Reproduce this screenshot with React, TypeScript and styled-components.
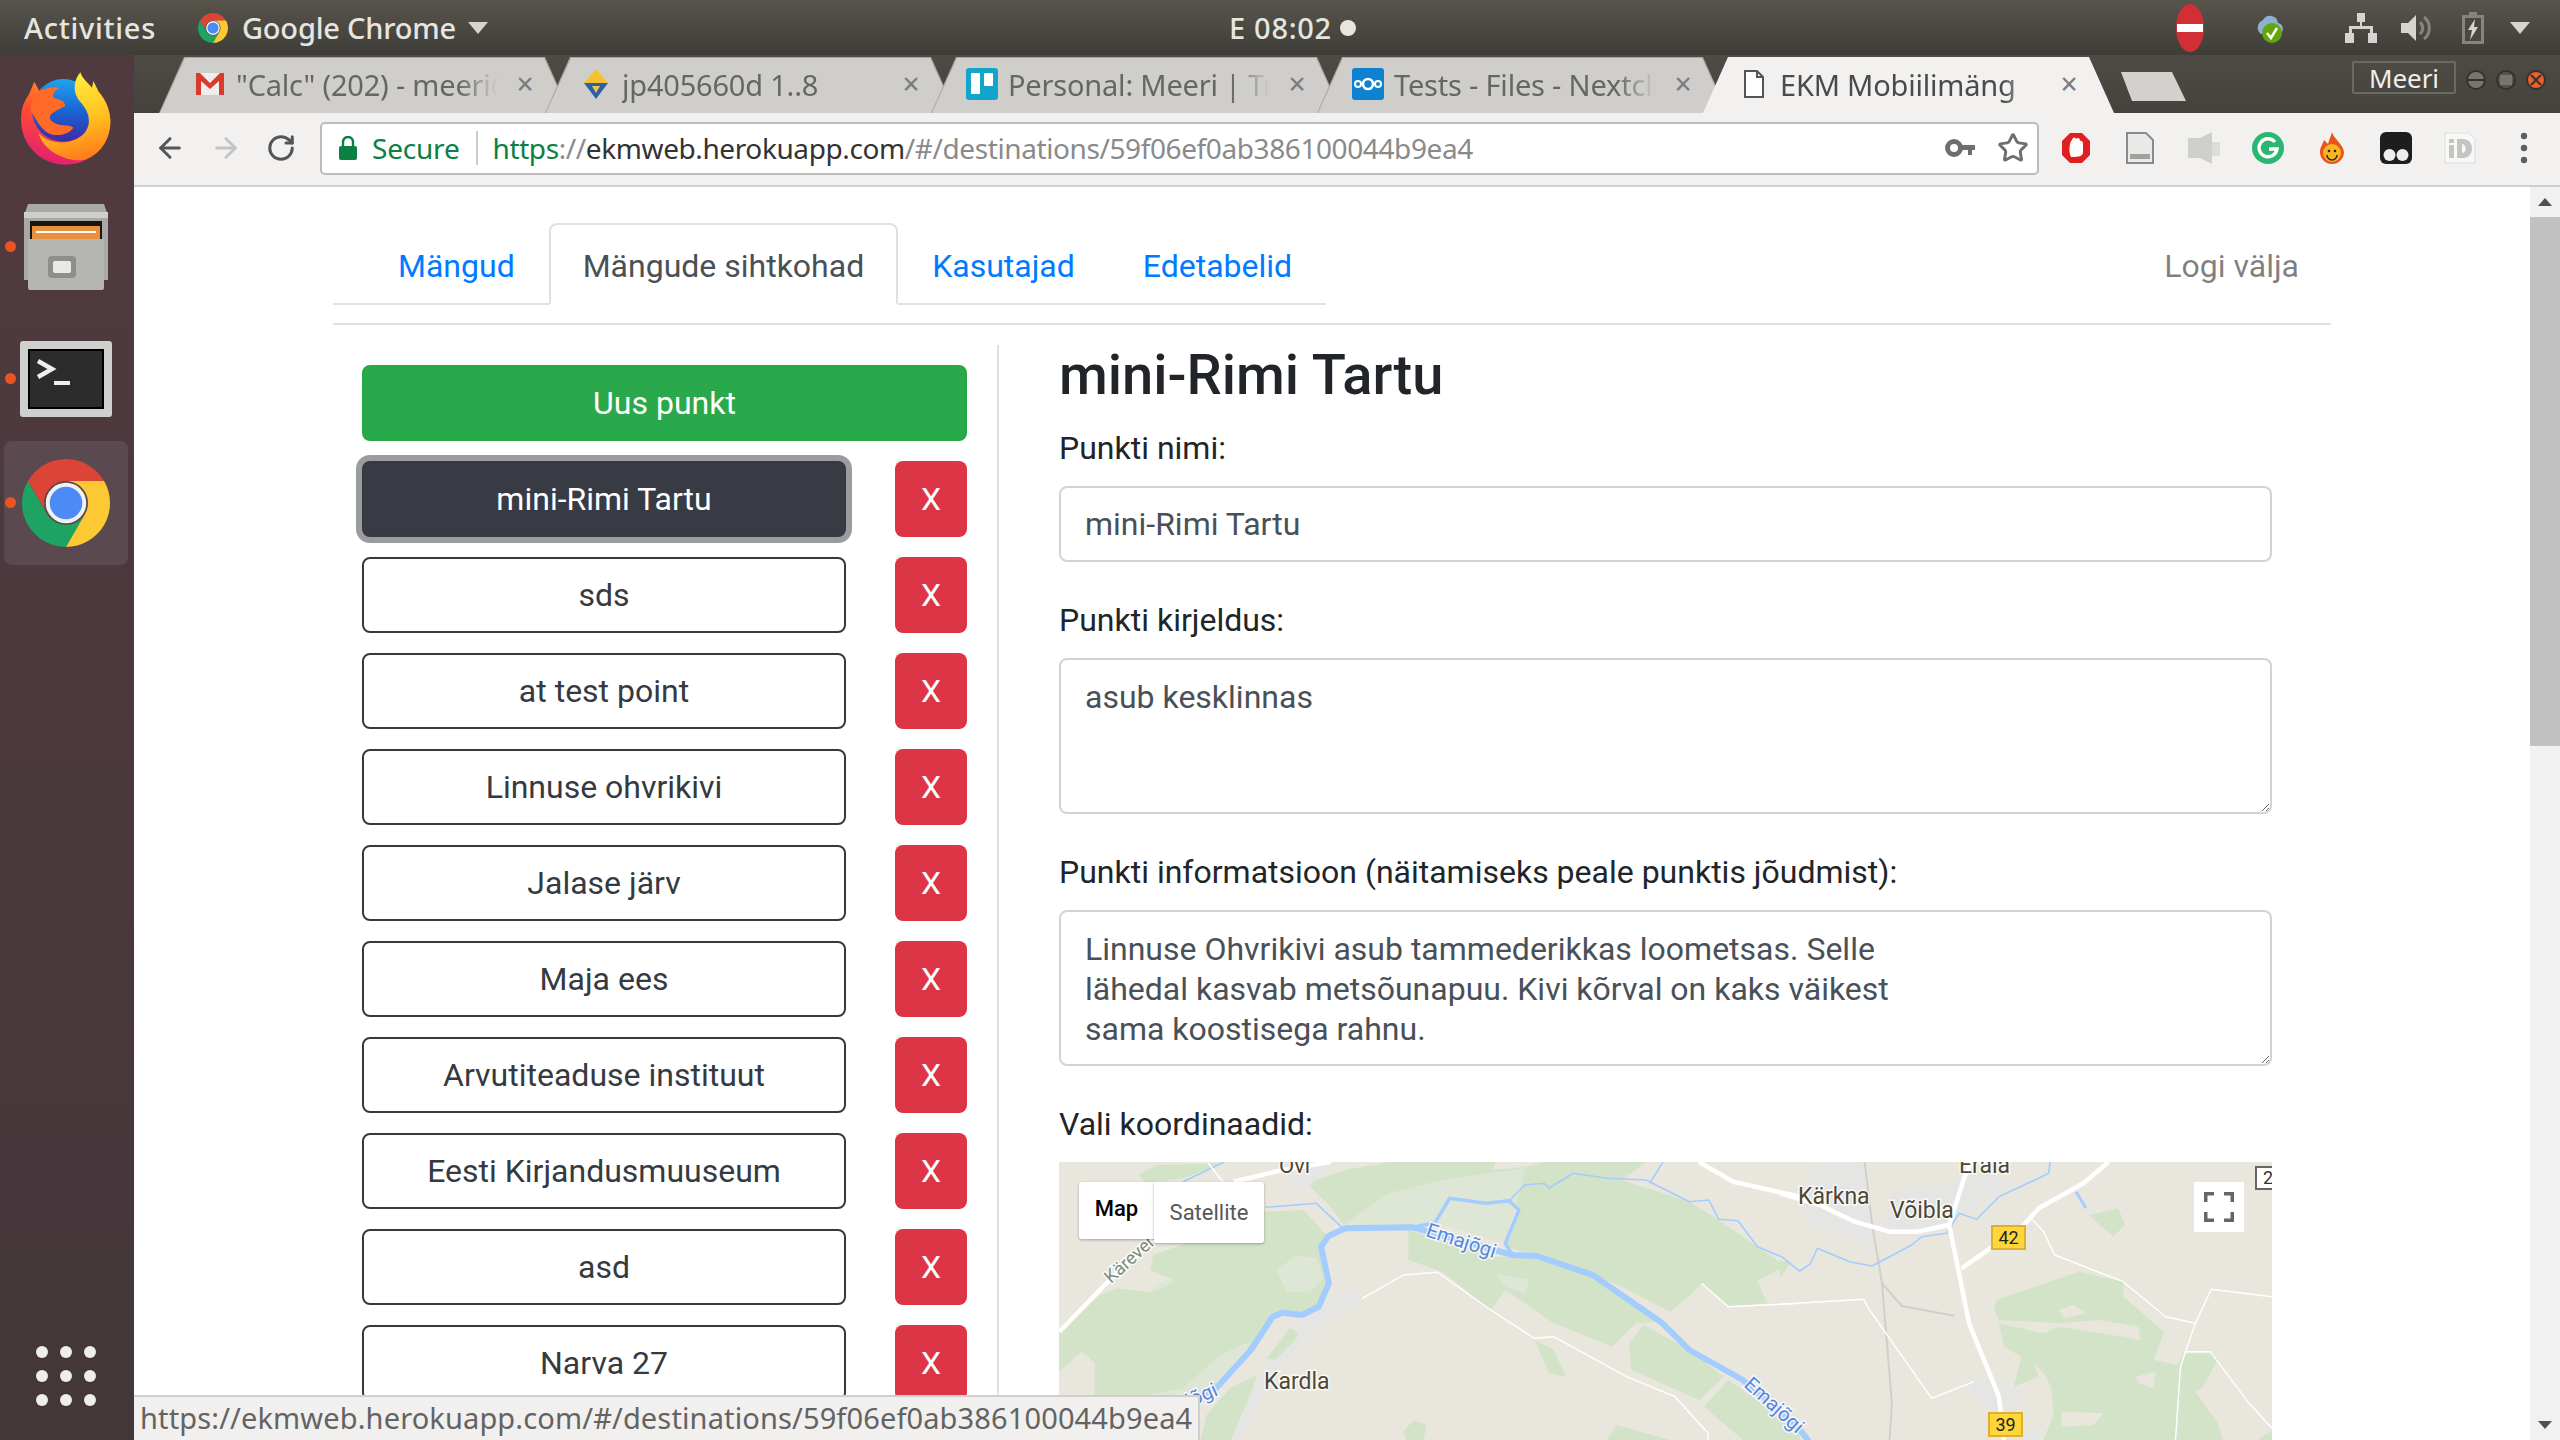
import React from "react";
import styled, { createGlobalStyle } from "styled-components";
import { ArrowLeft, ArrowRight, RotateCw, Star } from "lucide-react";

const UI_FONT = `"Noto Sans", "Open Sans", sans-serif`;

const GlobalStyle = createGlobalStyle`
  html, body { margin: 0; padding: 0; height: 100%; overflow: hidden; background: #fff; }
  * { box-sizing: border-box; }
`;

const Screen = styled.div`
  width: 2560px;
  height: 1440px;
  display: flex;
  flex-direction: column;
  overflow: hidden;
  font-family: Roboto, sans-serif;
`;

/* ---- gnome top bar ---- */
const TopBar = styled.div`
  height: 55px;
  flex: none;
  display: flex;
  align-items: center;
  background: linear-gradient(#57544c, #3f3d38);
  color: #e6e5e1;
  font-family: ${UI_FONT};
  font-size: 29px;
  font-weight: 500;
`;
const TopLeft = styled.div`
  width: 1229px;
  padding-left: 24px;
  display: flex;
  align-items: center;
`;
const Activities = styled.span`
  letter-spacing: 0.7px;
  margin-right: 42px;
`;
const AppName = styled.span`
  letter-spacing: -0.2px;
  margin: 0 12px 0 14px;
`;
const Clock = styled.div`
  display: flex;
  align-items: center;
  gap: 8px;
  letter-spacing: 0.7px;
`;
const ClockDot = styled.span`
  width: 16px;
  height: 16px;
  border-radius: 50%;
  background: #e6e5e1;
`;
const Tray = styled.div`
  margin-left: auto;
  display: flex;
  align-items: center;
  padding-right: 30px;
`;
const TraySlot = styled.div<{ $gap: number }>`
  margin-left: ${({ $gap }) => $gap}px;
  display: flex;
`;

const Middle = styled.div`
  flex: 1;
  min-height: 0;
  display: flex;
`;

/* ---- launcher dock ---- */
const Dock = styled.div`
  width: 134px;
  flex: none;
  display: flex;
  flex-direction: column;
  align-items: center;
  background: linear-gradient(#513a3f, #43373a);
  padding: 4px 2px 0 0;
`;
const DockItem = styled.div<{ $height: number; $active?: boolean }>`
  position: relative;
  width: 124px;
  height: ${({ $height }) => $height}px;
  flex: none;
  display: flex;
  align-items: center;
  justify-content: center;
  border-radius: 8px;
  background: ${({ $active }) => ($active ? "#5a494e" : "transparent")};
`;
const RunningDot = styled.span`
  position: absolute;
  left: 1px;
  top: 50%;
  width: 11px;
  height: 11px;
  margin-top: -6px;
  border-radius: 50%;
  background: #e95420;
`;
const AppGrid = styled.div`
  margin-top: auto;
  margin-bottom: 34px;
  display: grid;
  grid-template-columns: repeat(3, 12px);
  gap: 12px;
`;
const AppGridDot = styled.span`
  width: 12px;
  height: 12px;
  border-radius: 50%;
  background: #efeeec;
`;

/* ---- browser window ---- */
const Browser = styled.div`
  flex: 1;
  min-width: 0;
  display: flex;
  flex-direction: column;
  position: relative;
`;
const TabStrip = styled.div`
  height: 58px;
  flex: none;
  display: flex;
  align-items: flex-end;
  padding-left: 25px;
  background: linear-gradient(#4d4b44, #44423c);
  font-family: ${UI_FONT};
`;
const Tab = styled.div<{ $active?: boolean }>`
  position: relative;
  width: 411px;
  height: 56px;
  margin-right: -25px;
  flex: none;
  display: flex;
  align-items: center;
  padding: 0 30px 2px 35px;
  z-index: ${({ $active }) => ($active ? 2 : 1)};
  color: ${({ $active }) => ($active ? "#4a4a4a" : "#666")};
  font-size: 29px;
  clip-path: polygon(0 100%, 25px 0, 386px 0, 411px 100%);
  background: ${({ $active }) => ($active ? "#f2f1ef" : "#a8a7a4")};
  &::before {
    content: "";
    position: absolute;
    inset: 1px 0 0;
    background: ${({ $active }) => ($active ? "#f2f1ef" : "#cfcecb")};
    clip-path: polygon(1px 100%, 26px 0, 385px 0, 410px 100%);
  }
  & > * {
    position: relative;
  }
`;
const Favicon = styled.span`
  width: 32px;
  height: 32px;
  flex: none;
  display: flex;
  align-items: center;
  justify-content: center;
  margin-right: 10px;
`;
const TabTitle = styled.span`
  flex: 1;
  min-width: 0;
  margin-right: 12px;
  overflow: hidden;
  white-space: nowrap;
  letter-spacing: -0.2px;
  -webkit-mask-image: linear-gradient(to right, #000 85%, transparent 100%);
  mask-image: linear-gradient(to right, #000 85%, transparent 100%);
`;
const TabClose = styled.span`
  width: 30px;
  flex: none;
  text-align: center;
  font-size: 30px;
  line-height: 30px;
  color: #7b7b7b;
`;
const NewTab = styled.span`
  width: 65px;
  height: 29px;
  margin: 0 0 12px 32px;
  flex: none;
  z-index: 2;
  background: #d2d1ce;
  clip-path: polygon(0 0, 51px 0, 65px 100%, 11px 100%);
`;
const WindowTools = styled.div`
  margin-left: auto;
  align-self: flex-start;
  display: flex;
  align-items: center;
  padding: 6px 9px 0 0;
`;
const ProfileButton = styled.span`
  width: 104px;
  height: 33px;
  border: 2px solid #6b6a62;
  border-radius: 2px;
  display: flex;
  align-items: center;
  justify-content: center;
  color: #f0efec;
  font-size: 26px;
  letter-spacing: -0.1px;
  margin-right: 5px;
`;
const WindowButton = styled.span`
  width: 20px;
  height: 20px;
  margin: 5px 5px 0;
  display: flex;
`;

const Toolbar = styled.div`
  height: 74px;
  flex: none;
  display: flex;
  align-items: center;
  padding: 0 0 2px 20px;
  background: #f2f1ef;
  border-bottom: 2px solid #d0cfcd;
`;
const NavIcon = styled.span<{ $off?: boolean }>`
  width: 56px;
  display: flex;
  color: ${({ $off }) => ($off ? "#c4c4c4" : "#555")};
`;
const AddressBar = styled.div`
  width: 1719px;
  height: 53px;
  margin-left: -2px;
  flex: none;
  display: flex;
  align-items: center;
  padding: 0 6px 0 17px;
  background: #fff;
  border: 2px solid #bcbcbb;
  border-radius: 5px;
  font-family: ${UI_FONT};
  font-size: 28px;
  white-space: nowrap;
`;
const SecureLabel = styled.span`
  color: #0b8043;
  margin-left: 15px;
  letter-spacing: -0.2px;
`;
const AddressDivider = styled.span`
  width: 2px;
  height: 34px;
  margin: 0 15px 0 16px;
  background: #ccc;
`;
const UrlPart = styled.span<{ $tone: "secure" | "dim" | "host" }>`
  letter-spacing: -0.4px;
  color: ${({ $tone }) =>
    $tone === "secure" ? "#0b8043" : $tone === "host" ? "#333" : "#8a8a8a"};
`;
const AddressIcons = styled.div`
  margin-left: auto;
  display: flex;
  align-items: center;
  gap: 22px;
  padding-right: 2px;
  color: #6e6e6e;
`;
const Extensions = styled.div`
  display: flex;
  margin-left: 5px;
`;
const ExtensionSlot = styled.span`
  width: 64px;
  display: flex;
  justify-content: center;
  align-items: center;
`;

/* ---- web page ---- */
const Viewport = styled.div`
  flex: 1;
  min-height: 0;
  display: flex;
`;
const Page = styled.main`
  flex: 1;
  min-width: 0;
  overflow: hidden;
  background: #fff;
  color: #212529;
  font-size: 32px;
  line-height: 48px;
`;
const Container = styled.div`
  width: 1998px;
  margin: 0 auto;
  padding-top: 36px;
`;
const Header = styled.header`
  display: flex;
  justify-content: space-between;
  align-items: flex-start;
  padding-bottom: 18px;
  border-bottom: 2px solid #dee2e6;
`;
const NavTabs = styled.nav`
  width: 993px;
  display: flex;
  padding-left: 31px;
  border-bottom: 2px solid #dee2e6;
`;
const NavTab = styled.a<{ $active?: boolean }>`
  height: 82px;
  margin-bottom: -2px;
  padding: 17px 32px 0;
  border: 2px solid ${({ $active }) => ($active ? "#dee2e6" : "transparent")};
  border-bottom-color: ${({ $active }) => ($active ? "#fff" : "transparent")};
  border-radius: 8px 8px 0 0;
  color: ${({ $active }) => ($active ? "#495057" : "#007bff")};
  white-space: nowrap;
`;
const Logout = styled.a`
  margin: 19px 32px 0 0;
  color: rgba(0, 0, 0, 0.5);
`;
const Columns = styled.div`
  display: flex;
  align-items: flex-start;
`;
const ListColumn = styled.aside`
  width: 666px;
  flex: none;
  margin-top: 20px;
  padding: 20px 30px 0 29px;
  border-right: 2px solid #dee2e6;
  display: flex;
  flex-direction: column;
  gap: 20px;
`;
const PrimaryButton = styled.button`
  height: 76px;
  border: 2px solid #28a745;
  border-radius: 8px;
  background: #2aa84c;
  color: #fff;
  font: inherit;
`;
const PointRow = styled.div`
  display: flex;
  justify-content: space-between;
`;
const PointButton = styled.button<{ $selected?: boolean }>`
  width: 484px;
  height: 76px;
  border: 2px solid #343a40;
  border-radius: 8px;
  font: inherit;
  background: ${({ $selected }) => ($selected ? "#383b43" : "#fff")};
  color: ${({ $selected }) => ($selected ? "#fff" : "#343a40")};
  box-shadow: ${({ $selected }) => ($selected ? "0 0 0 6px #9b9c9f" : "none")};
`;
const DeleteButton = styled.button`
  width: 72px;
  height: 76px;
  border: 0;
  border-radius: 8px;
  background: #dc3545;
  color: #fff;
  font: inherit;
`;
const DetailColumn = styled.section`
  flex: 1;
  padding: 17px 0 0 60px;
`;
const Title = styled.h2`
  margin: 0 0 13px;
  font-size: 56px;
  line-height: 67px;
  font-weight: 500;
`;
const FieldLabel = styled.label`
  display: block;
  padding-top: 2px;
  margin-bottom: 14px;
`;
const Field = styled.div`
  margin-bottom: 32px;
`;
const TextInput = styled.input`
  display: block;
  width: 1213px;
  height: 76px;
  padding: 12px 24px;
  border: 2px solid #ced4da;
  border-radius: 8px;
  color: #495057;
  font: inherit;
  line-height: 40px;
  outline: none;
`;
const TextArea = styled.textarea<{ $height: number }>`
  display: block;
  width: 1213px;
  height: ${({ $height }) => $height}px;
  padding: 17px 24px 7px;
  border: 2px solid #ced4da;
  border-radius: 8px;
  color: #495057;
  font: inherit;
  line-height: 40px;
  outline: none;
`;
const MapFrame = styled.div`
  position: relative;
  width: 1213px;
  height: 280px;
  overflow: hidden;
  font-family: Roboto, sans-serif;
`;
const MapTypes = styled.div`
  position: absolute;
  left: 20px;
  top: 20px;
  display: flex;
  align-items: flex-start;
  font-size: 22px;
  line-height: 26px;
`;
const MapType = styled.span<{ $active?: boolean }>`
  display: flex;
  align-items: center;
  justify-content: center;
  background: #fff;
  width: ${({ $active }) => ($active ? 75 : 110)}px;
  height: ${({ $active }) => ($active ? 57 : 61)}px;
  color: ${({ $active }) => ($active ? "#000" : "#565656")};
  font-weight: ${({ $active }) => ($active ? 500 : 400)};
  border-radius: ${({ $active }) => ($active ? "3px 0 0 3px" : "0 3px 3px 0")};
  box-shadow: 0 1px 3px rgba(0, 0, 0, 0.3);
  padding-bottom: ${({ $active }) => ($active ? 4 : 0)}px;
`;
const FullscreenButton = styled.span`
  position: absolute;
  left: 1135px;
  top: 20px;
  width: 50px;
  height: 50px;
  display: flex;
  align-items: center;
  justify-content: center;
  background: #fff;
`;
const ZoomBadge = styled.span`
  position: absolute;
  left: 1196px;
  top: 4px;
  width: 20px;
  height: 24px;
  padding-left: 6px;
  background: #fff;
  border: 2px solid #666;
  color: #333;
  font-size: 18px;
  line-height: 20px;
`;

const Scrollbar = styled.div`
  width: 30px;
  flex: none;
  display: flex;
  flex-direction: column;
  background: #f1f1f1;
  align-items: center;
`;
const ScrollArrow = styled.span<{ $down?: boolean }>`
  height: 30px;
  flex: none;
  display: flex;
  align-items: center;
  margin-top: ${({ $down }) => ($down ? "auto" : 0)};
`;
const ScrollThumb = styled.span`
  width: 100%;
  height: 529px;
  background: #c1c1c1;
`;
const StatusBubble = styled.div`
  position: absolute;
  left: 0;
  bottom: 0;
  width: 1066px;
  height: 45px;
  padding-left: 6px;
  background: #f1f0ee;
  border-top: 2px solid #cfcfcd;
  border-right: 2px solid #cfcfcd;
  color: #636363;
  font-family: ${UI_FONT};
  font-size: 29px;
  line-height: 42px;
  letter-spacing: 0.13px;
  white-space: nowrap;
`;

/* ---- drawn icons ---- */
const ChromeLogo = ({ size }: { size: number }) => (
  <svg width={size} height={size} viewBox="4 4 40 40">
    <path d="M6.68 14A20 20 0 0 1 41.32 14H24A10 10 0 0 0 15.34 29Z" fill="#db4437" />
    <path d="M6.68 14L15.34 29A10 10 0 0 0 32.66 29L24 44A20 20 0 0 1 6.68 14Z" fill="#1da462" />
    <path d="M41.32 14A20 20 0 0 1 24 44L32.66 29A10 10 0 0 0 24 14Z" fill="#fcc934" />
    <circle cx="24" cy="24" r="9.2" fill="#f1f1f1" />
    <circle cx="24" cy="24" r="7.4" fill="#4c8bf5" />
  </svg>
);

const FirefoxLogo = () => (
  <svg width="92" height="95" viewBox="62 46 276 285">
    <defs>
      <linearGradient id="ffBody" x1="0.75" y1="0.05" x2="0.45" y2="1">
        <stop offset="0" stopColor="#ff9a1f" />
        <stop offset="0.45" stopColor="#ff4f2e" />
        <stop offset="1" stopColor="#e6206e" />
      </linearGradient>
      <linearGradient id="ffGlobe" x1="0.5" y1="0" x2="0.5" y2="1">
        <stop offset="0" stopColor="#1ea4ee" />
        <stop offset="0.55" stopColor="#1b5fd0" />
        <stop offset="1" stopColor="#3d2aa6" />
      </linearGradient>
      <linearGradient id="ffTail" x1="0.4" y1="0" x2="0.6" y2="1">
        <stop offset="0" stopColor="#fff044" />
        <stop offset="0.55" stopColor="#ffc21f" />
        <stop offset="1" stopColor="#ff7a1c" />
      </linearGradient>
    </defs>
    <path d="M88 118L105 78L120 106L200 96L300 110C325 140 333 170 333 197C333 270 272 327 200 327C125 327 65 268 65 192C65 160 74 136 88 118Z" fill="url(#ffBody)" />
    <circle cx="192" cy="164" r="94" fill="url(#ffGlobe)" />
    <path d="M118 106C140 96 165 92 182 96C165 104 156 118 165 128C176 130 196 134 198 150C186 158 172 162 160 172C146 182 150 196 170 204C190 212 212 206 222 216C210 232 190 240 165 238C125 232 112 190 96 170C92 140 100 118 118 106Z" fill="#ff6a26" />
    <path d="M243 50C224 72 220 104 236 130C256 154 272 172 268 206C262 236 232 258 196 260C160 262 136 252 118 232C132 290 210 322 256 312C306 296 335 246 333 192C330 160 318 134 300 112L282 76L278 96C268 84 250 70 243 50Z" fill="url(#ffTail)" />
  </svg>
);

const FileCabinet = () => (
  <svg width="84" height="86" viewBox="0 0 84 86">
    <path d="M4 0H80L84 12V76H0V12Z" fill="#a9a9a7" />
    <rect x="0" y="8" width="84" height="6" fill="#cfcfcd" />
    <rect x="6" y="17" width="72" height="20" fill="#1b1510" />
    <rect x="8" y="22" width="68" height="20" fill="#e8913a" />
    <rect x="12" y="27" width="60" height="2" fill="#fff" />
    <rect x="4" y="35" width="76" height="51" rx="2" fill="#b5b5b3" />
    <rect x="24" y="52" width="28" height="22" rx="4" fill="#8e8e8c" />
    <rect x="29" y="57" width="18" height="12" rx="2" fill="#e9e9e7" />
  </svg>
);

const TerminalIcon = () => (
  <svg width="92" height="76" viewBox="0 0 92 76">
    <rect width="92" height="76" rx="3" fill="#cfcfcd" />
    <rect x="8" y="8" width="76" height="60" fill="#000" />
    <rect x="10" y="10" width="72" height="56" fill="#2c2c2c" />
    <path d="M18 20L32 28L18 36" fill="none" stroke="#eee" strokeWidth="4.5" />
    <rect x="34" y="40" width="16" height="4" fill="#eee" />
  </svg>
);

const DropArrow = ({ color }: { color: string }) => (
  <svg width="20" height="12" viewBox="0 0 20 12">
    <path d="M0 0H20L10 12Z" fill={color} />
  </svg>
);

const GmailIcon = () => (
  <svg width="28" height="22" viewBox="0 0 28 22">
    <rect width="28" height="22" fill="#eee" />
    <path d="M0 22V0H4L14 10L24 0H28V22H23V8L14 16L5 8V22Z" fill="#d93a2e" />
  </svg>
);
const JpIcon = () => (
  <svg width="30" height="30" viewBox="0 0 30 30">
    <path d="M15 0L27 14H3Z" fill="#f2c230" />
    <path d="M3 14H27L15 30Z" fill="#2f5fa8" />
    <path d="M11 17H19L15 24Z" fill="#e8c84a" />
  </svg>
);
const TrelloIcon = () => (
  <svg width="32" height="32" viewBox="0 0 32 32">
    <rect width="32" height="32" rx="3" fill="#12a4c9" />
    <rect x="5" y="5" width="9" height="21" rx="1" fill="#fff" />
    <rect x="18" y="5" width="9" height="13" rx="1" fill="#fff" />
  </svg>
);
const NextcloudIcon = () => (
  <svg width="32" height="32" viewBox="0 0 32 32">
    <rect width="32" height="32" rx="3" fill="#0d82d0" />
    <circle cx="16" cy="16" r="5" fill="none" stroke="#fff" strokeWidth="2.6" />
    <circle cx="6" cy="16" r="3" fill="none" stroke="#fff" strokeWidth="2" />
    <circle cx="26" cy="16" r="3" fill="none" stroke="#fff" strokeWidth="2" />
  </svg>
);
const PageIcon = () => (
  <svg width="20" height="28" viewBox="0 0 20 28">
    <path d="M1 1H13L19 7V27H1Z" fill="#fff" stroke="#555" strokeWidth="2" />
    <path d="M13 1V7H19" fill="none" stroke="#555" strokeWidth="2" />
  </svg>
);

const MAP_W = 1213;
const MAP_H = 280;
type Pts = number[];
const fmt = (p: number[]) => p.map((v) => v.toFixed(1)).join(" ");
// traced from crops of the map, each with its own scale
const left = (p: Pts) => fmt(p.map((v, i) => (i % 2 === 0 ? v / 2.063 - 19 : v / 3 - 12)));
const right = (p: Pts) => fmt(p.map((v, i) => (i % 2 === 0 ? v / 2.01 + 721 : v / 3 - 12)));
const near = (p: Pts) => fmt(p.map((v, i) => (i % 2 === 0 ? v / 3 - 9 : v / 3 - 7)));

const FOREST = "#d3e3c8";
const FOREST_LIGHT = "#dee7d6";
const URBAN = "#e5e5e4";
const RIVER = "#a3ccff";
const LAND = "#e9e7dd";
const forestNear: Pts[] = [
  [27, 530, 150, 420, 200, 400, 290, 410, 370, 375, 300, 345, 310, 300, 420, 260, 640, 170, 760, 165, 830, 240, 810, 280, 835, 380, 800, 460, 750, 475, 690, 470, 640, 510, 600, 590, 500, 690, 440, 760, 400, 860, 130, 860, 135, 625, 95, 590, 27, 650],
  [265, 60, 320, 30, 520, 25, 400, 70, 290, 85],
  [650, 610, 720, 520, 760, 540, 700, 620],
  [470, 780, 540, 700, 620, 660, 560, 860, 450, 860],
  [1060, 830, 1090, 795, 1130, 810, 1120, 860, 1070, 860],
];
const forestLightNear: Pts[] = [
  [680, 345, 740, 300, 800, 310, 820, 370, 780, 410, 710, 410],
  [400, 700, 510, 600, 600, 560, 590, 590, 500, 690, 440, 720, 290, 720],
  [290, 410, 350, 372, 372, 380, 310, 412],
];
const urbanNear: Pts[] = [
  [710, 70, 830, 25, 860, 25, 800, 70, 770, 105, 720, 105],
  [750, 500, 905, 390, 935, 430, 800, 530, 750, 570, 680, 660, 640, 710, 600, 790, 570, 860, 540, 860, 600, 720, 650, 640, 740, 550],
];
const forestLeft: Pts[] = [
  [550, 100, 630, 60, 720, 36, 940, 36, 935, 60, 1000, 50, 1040, 36, 1250, 36, 1200, 90, 1340, 155, 1400, 210, 1540, 350, 1480, 390, 1500, 460, 1420, 470, 1365, 400, 1345, 430, 1300, 485, 1200, 410, 1140, 375, 1025, 318, 960, 290, 990, 180, 968, 150, 920, 160, 845, 145, 815, 218, 630, 235, 600, 170],
  [760, 240, 940, 320, 1025, 320, 1140, 380, 1280, 515, 1230, 520, 1180, 590, 1060, 520, 960, 420, 930, 480, 830, 365, 760, 330],
  [1215, 580, 1245, 525, 1340, 600, 1410, 680, 1360, 750, 1220, 660],
  [1370, 770, 1420, 690, 1568, 840, 1568, 870, 1450, 870],
  [1020, 570, 1060, 600, 1085, 680, 1050, 670],
  [1170, 870, 1190, 825, 1300, 870],
];
const forestLightLeft: Pts[] = [
  [620, 230, 720, 130, 830, 90, 1000, 55, 990, 120, 960, 280, 820, 220],
  [940, 370, 1010, 390, 1000, 430, 960, 410],
];
const forestRight: Pts[] = [
  [435, 450, 600, 365, 690, 395, 690, 440, 772, 545, 752, 630, 800, 645, 810, 610, 870, 610, 880, 630, 850, 710, 835, 725, 880, 820, 890, 870, 530, 870, 550, 790, 545, 710, 530, 670, 510, 640, 520, 680, 470, 710, 485, 620, 450, 590, 440, 520, 530, 550, 560, 530, 690, 560, 725, 570, 720, 530, 640, 510, 565, 520, 440, 510, 430, 480],
  [620, 195, 680, 175, 693, 225, 670, 260],
  [960, 870, 989, 840, 989, 870],
  [0, 330, 20, 340, 0, 385],
];
const landPatchesRight: Pts[] = [
  [565, 785, 650, 790, 630, 825, 565, 830],
  [715, 680, 755, 665, 750, 715, 720, 700],
  [560, 480, 590, 465, 615, 490, 570, 505],
];
const urbanRight: Pts[] = [
  [60, 50, 125, 36, 165, 36, 190, 280, 120, 265, 60, 215, 50, 190],
  [220, 130, 350, 100, 370, 36, 470, 100, 440, 130, 400, 170, 350, 210, 340, 225, 240, 245, 200, 280],
  [385, 690, 440, 690, 490, 720, 480, 760, 450, 790, 460, 830, 530, 850, 520, 870, 450, 870, 430, 790, 380, 730],
];
const mainRiver = left([360, 720, 435, 600, 480, 500, 500, 488, 540, 495, 575, 470, 596, 400, 580, 290, 595, 258, 630, 235, 770, 232, 975, 315, 1025, 318, 1140, 375, 1280, 515, 1340, 600, 1450, 690, 1568, 840, 1600, 900]);
const riverMouth = near([500, 690, 430, 745]);
const riverLoop = left([770, 232, 815, 218, 845, 145, 920, 160, 968, 152, 988, 180, 960, 280, 975, 315]);
const thinRivers = [
  left([968, 152, 1000, 105, 1040, 100, 1050, 115, 1100, 70, 1170, 85, 1250, 90, 1340, 155, 1380, 150, 1400, 208, 1440, 212, 1480, 290, 1530, 320, 1568, 365]),
  right([40, 363, 62, 340, 75, 295, 140, 335, 185, 348, 265, 285, 285, 260, 335, 250, 360, 190, 395, 208, 440, 140, 520, 85, 540, 70, 543, 36]),
  left([1285, 36, 1260, 95]),
  left([295, 95, 380, 36]),
  left([465, 172, 570, 160, 625, 235]),
];
const wideRoads = [
  left([400, 95, 500, 60, 600, 36]),
  left([40, 545, 140, 395, 235, 265]),
  left([1360, 36, 1430, 95, 1568, 140]),
  right([0, 130, 80, 165, 150, 215, 220, 245, 275, 245, 340, 225, 370, 85, 385, 36]),
  right([340, 225, 380, 520, 440, 740, 450, 870]),
  right([365, 355, 490, 225, 520, 175, 610, 100, 660, 36]),
];
const narrowRoads = [
  near([475, 25, 520, 82]),
  left([665, 445, 750, 375, 820, 367, 930, 480, 1020, 565, 1060, 560, 1210, 680, 1310, 740, 1378, 850, 1378, 870]),
  left([1365, 400, 1420, 470, 1568, 460]),
  right([0, 463, 168, 448, 180, 480, 305, 745, 390, 695]),
  right([505, 205, 530, 245, 552, 315, 690, 395, 775, 500, 835, 520, 867, 418, 989, 440]),
  right([835, 520, 815, 605, 805, 650, 795, 870]),
  right([815, 605, 865, 605, 940, 755, 989, 835]),
];

const MapText = styled.text<{ $size: number; $fill: string }>`
  font-family: Roboto, sans-serif;
  font-size: ${({ $size }) => $size}px;
  fill: ${({ $fill }) => $fill};
  stroke: rgba(255, 255, 255, 0.75);
  stroke-width: 3px;
  paint-order: stroke;
`;

const RoadShield = ({ x, y, label }: { x: number; y: number; label: string }) => (
  <g>
    <rect x={x} y={y} width="33" height="23" fill="#fdd73a" stroke="#e2ae2e" strokeWidth="2" />
    <text x={x + 16.5} y={y + 18} textAnchor="middle" fontFamily="Roboto, sans-serif" fontSize="18" fill="#222">
      {label}
    </text>
  </g>
);

const MapDrawing = () => (
  <svg width={MAP_W} height={MAP_H} viewBox={`0 0 ${MAP_W} ${MAP_H}`}>
    <rect width={MAP_W} height={MAP_H} fill={LAND} />
    {forestNear.map((p, i) => <polygon key={i} points={near(p)} fill={FOREST} />)}
    {forestLeft.map((p, i) => <polygon key={i} points={left(p)} fill={FOREST} />)}
    {forestRight.map((p, i) => <polygon key={i} points={right(p)} fill={FOREST} />)}
    {forestLightNear.map((p, i) => <polygon key={i} points={near(p)} fill={FOREST_LIGHT} />)}
    {forestLightLeft.map((p, i) => <polygon key={i} points={left(p)} fill={FOREST_LIGHT} />)}
    {landPatchesRight.map((p, i) => <polygon key={i} points={right(p)} fill={LAND} />)}
    {urbanNear.map((p, i) => <polygon key={i} points={near(p)} fill={URBAN} />)}
    {urbanRight.map((p, i) => <polygon key={i} points={right(p)} fill={URBAN} />)}
    <g fill="none" strokeLinejoin="round">
      <polyline points={right([170, 36, 185, 220, 205, 400, 245, 468, 350, 497])} stroke="#cfcfcd" strokeWidth="2" />
      <polyline points={right([205, 400, 225, 760, 220, 870])} stroke="#cfcfcd" strokeWidth="2" />
      {thinRivers.map((p, i) => <polyline key={i} points={p} stroke={RIVER} strokeWidth="1.6" />)}
      <polyline points={right([595, 125, 615, 175])} stroke={RIVER} strokeWidth="3" />
      <polyline points={mainRiver} stroke={RIVER} strokeWidth="6" />
      <polyline points={riverMouth} stroke={RIVER} strokeWidth="6" />
      <polyline points={riverLoop} stroke={RIVER} strokeWidth="3.5" />
      {narrowRoads.map((p, i) => <polyline key={i} points={p} stroke="#fff" strokeWidth="1.4" />)}
      {wideRoads.map((p, i) => <polyline key={i} points={p} stroke="#fff" strokeWidth="4.5" />)}
    </g>
    <MapText x="220" y="11" $size={22} $fill="#4f4732">Ovi</MapText>
    <MapText x="739" y="42" $size={23} $fill="#4f4732">Kärkna</MapText>
    <MapText x="831" y="56" $size={23} $fill="#4f4732">Võibla</MapText>
    <MapText x="900" y="11" $size={23} $fill="#4f4732">Erala</MapText>
    <MapText x="205" y="227" $size={23} $fill="#4f4732">Kardla</MapText>
    <MapText x="366" y="74" $size={20} $fill="#5b86d8" transform="rotate(18 366 74)">Emajõgi</MapText>
    <MapText x="684" y="224" $size={20} $fill="#5b86d8" transform="rotate(42 684 224)">Emajõgi</MapText>
    <MapText x="94" y="262" $size={20} $fill="#5b86d8" transform="rotate(-24 94 262)">Emajõgi</MapText>
    <MapText x="52" y="122" $size={18} $fill="#7d8878" transform="rotate(-42 52 122)">Kärevere</MapText>
    <RoadShield x={933} y={64} label="42" />
    <RoadShield x={930} y={251} label="39" />
  </svg>
);

const points = [
  "mini-Rimi Tartu",
  "sds",
  "at test point",
  "Linnuse ohvrikivi",
  "Jalase järv",
  "Maja ees",
  "Arvutiteaduse instituut",
  "Eesti Kirjandusmuuseum",
  "asd",
  "Narva 27",
];

const tabs = [
  { title: `"Calc" (202) - meeri@`, icon: <GmailIcon /> },
  { title: "jp405660d 1..8", icon: <JpIcon /> },
  { title: "Personal: Meeri | Trello", icon: <TrelloIcon /> },
  { title: "Tests - Files - Nextcloud", icon: <NextcloudIcon /> },
  { title: "EKM Mobiilimäng", icon: <PageIcon />, active: true },
];

const URL_TAIL = "/#/destinations/59f06ef0ab386100044b9ea4";

export default function App() {
  return (
    <Screen>
      <GlobalStyle />
      <TopBar>
        <TopLeft>
          <Activities>Activities</Activities>
          <ChromeLogo size={30} />
          <AppName>Google Chrome</AppName>
          <DropArrow color="#d5d4d0" />
        </TopLeft>
        <Clock>
          E 08:02
          <ClockDot />
        </Clock>
        <Tray>
          <TraySlot $gap={0}>
            <svg width="30" height="50" viewBox="0 0 30 50">
              <ellipse cx="15" cy="25" rx="14" ry="24" fill="#cf2f35" />
              <rect x="2" y="21" width="26" height="8" fill="#fff" />
            </svg>
          </TraySlot>
          <TraySlot $gap={48}>
            <svg width="34" height="32" viewBox="0 0 34 32">
              <path d="M6 20a8 8 0 0 1 4-12a8 8 0 0 1 15 3a6 6 0 0 1 2 11H8Z" fill="#8fb1cf" />
              <circle cx="19" cy="21" r="10" fill="#62a60f" />
              <path d="M14 21l4 5l6-10" fill="none" stroke="#fff" strokeWidth="2.5" />
            </svg>
          </TraySlot>
          <TraySlot $gap={58}>
            <svg width="32" height="30" viewBox="0 0 32 30">
              <path d="M12 0H20V9H17V13H28V20H32V30H23V20H25V16H7V20H9V30H0V20H4V13H15V9H12Z" fill="#d5d4d0" />
            </svg>
          </TraySlot>
          <TraySlot $gap={24}>
            <svg width="32" height="30" viewBox="0 0 32 30">
              <path d="M0 10H7L15 2V28L7 20H0Z" fill="#d5d4d0" />
              <path d="M19 9a8 8 0 0 1 0 12M23 4a14 14 0 0 1 0 22" fill="none" stroke="#85847e" strokeWidth="3" />
            </svg>
          </TraySlot>
          <TraySlot $gap={29}>
            <svg width="22" height="32" viewBox="0 0 22 32">
              <path d="M7 0H15V3H22V32H0V3H7Z" fill="#85847e" />
              <rect x="3" y="6" width="16" height="23" fill="#4a4842" />
              <path d="M13 7L6 18H10L8 28L16 15H12Z" fill="#d5d4d0" />
            </svg>
          </TraySlot>
          <TraySlot $gap={26}>
            <DropArrow color="#d5d4d0" />
          </TraySlot>
        </Tray>
      </TopBar>
      <Middle>
        <Dock>
          <DockItem $height={118}><FirefoxLogo /></DockItem>
          <DockItem $height={139}><RunningDot /><FileCabinet /></DockItem>
          <DockItem $height={125}><RunningDot /><TerminalIcon /></DockItem>
          <DockItem $height={124} $active><RunningDot /><ChromeLogo size={88} /></DockItem>
          <AppGrid>
            {Array.from({ length: 9 }, (_, i) => <AppGridDot key={i} />)}
          </AppGrid>
        </Dock>
        <Browser>
          <TabStrip>
            {tabs.map((tab) => (
              <Tab key={tab.title} $active={tab.active}>
                <Favicon>{tab.icon}</Favicon>
                <TabTitle>{tab.title}</TabTitle>
                <TabClose>×</TabClose>
              </Tab>
            ))}
            <NewTab />
            <WindowTools>
              <ProfileButton>Meeri</ProfileButton>
              <WindowButton>
                <svg width="20" height="20" viewBox="0 0 20 20">
                  <circle cx="10" cy="10" r="9" fill="#77766e" stroke="#33322d" strokeWidth="2" />
                  <rect x="2" y="9" width="16" height="2" fill="#33322d" />
                </svg>
              </WindowButton>
              <WindowButton>
                <svg width="20" height="20" viewBox="0 0 20 20">
                  <circle cx="10" cy="10" r="9" fill="#55544c" stroke="#33322d" strokeWidth="2" />
                  <rect x="4" y="5" width="12" height="10" fill="#77766e" />
                </svg>
              </WindowButton>
              <WindowButton>
                <svg width="20" height="20" viewBox="0 0 20 20">
                  <circle cx="10" cy="10" r="9" fill="#e9602c" stroke="#33322d" strokeWidth="2" />
                  <path d="M5 5L15 15M15 5L5 15" stroke="#33322d" strokeWidth="2" />
                </svg>
              </WindowButton>
            </WindowTools>
          </TabStrip>
          <Toolbar>
            <NavIcon><ArrowLeft size={32} strokeWidth={2.2} /></NavIcon>
            <NavIcon $off><ArrowRight size={32} strokeWidth={2.2} /></NavIcon>
            <NavIcon><RotateCw size={30} strokeWidth={2.4} /></NavIcon>
            <AddressBar>
              <svg width="18" height="24" viewBox="0 0 18 24">
                <path d="M4 10V6a5 5 0 0 1 10 0v4" fill="none" stroke="#0b8043" strokeWidth="2.4" />
                <rect y="10" width="18" height="14" rx="2" fill="#0b8043" />
              </svg>
              <SecureLabel>Secure</SecureLabel>
              <AddressDivider />
              <UrlPart $tone="secure">https</UrlPart>
              <UrlPart $tone="dim">://</UrlPart>
              <UrlPart $tone="host">ekmweb.herokuapp.com</UrlPart>
              <UrlPart $tone="dim">{URL_TAIL}</UrlPart>
              <AddressIcons>
                <svg width="30" height="20" viewBox="0 0 30 20">
                  <circle cx="9" cy="10" r="6.5" fill="none" stroke="#6e6e6e" strokeWidth="5" />
                  <path d="M16 7H30V12H27V17H23V12H16Z" fill="#6e6e6e" />
                </svg>
                <Star size={32} strokeWidth={2.2} />
              </AddressIcons>
            </AddressBar>
            <Extensions>
              <ExtensionSlot>
                <svg width="28" height="30" viewBox="0 0 28 30">
                  <path d="M8 0H20L28 8V22L20 30H8L0 22V8Z" fill="#e02020" />
                  <path d="M9 24C6 18 8 8 10 7C11 4 13 4 14 6C16 4 18 5 18 8C20 7 21 9 21 11V19C21 23 18 24 9 24Z" fill="#fff" />
                </svg>
              </ExtensionSlot>
              <ExtensionSlot>
                <svg width="28" height="32" viewBox="0 0 28 32">
                  <path d="M1 1H20L27 8V31H1Z" fill="#e9e9e7" stroke="#8a8a8a" strokeWidth="2" />
                  <rect x="4" y="22" width="20" height="5" fill="#a0a09e" />
                </svg>
              </ExtensionSlot>
              <ExtensionSlot>
                <svg width="32" height="32" viewBox="0 0 32 32">
                  <path d="M0 6H12L24 0V32L12 26H0Z" fill="#cfcfcd" />
                  <rect x="24" y="10" width="8" height="14" fill="#dcdcda" />
                </svg>
              </ExtensionSlot>
              <ExtensionSlot>
                <svg width="32" height="32" viewBox="0 0 32 32">
                  <circle cx="16" cy="16" r="16" fill="#2ab673" />
                  <path d="M23 10A9 9 0 1 0 25 17H17" fill="none" stroke="#fff" strokeWidth="3.4" />
                </svg>
              </ExtensionSlot>
              <ExtensionSlot>
                <svg width="26" height="32" viewBox="0 0 26 32">
                  <path d="M13 0C14 6 24 12 25 20A12 12 0 0 1 1 20C1 15 4 12 5 8C7 10 8 11 9 12C10 8 12 4 13 0Z" fill="#e8541c" />
                  <circle cx="13" cy="21" r="9" fill="#f8b51f" />
                  <circle cx="10" cy="19" r="1.3" fill="#222" />
                  <circle cx="16" cy="19" r="1.3" fill="#222" />
                  <path d="M8 23a5 5 0 0 0 10 0" fill="none" stroke="#222" strokeWidth="1.5" />
                </svg>
              </ExtensionSlot>
              <ExtensionSlot>
                <svg width="32" height="32" viewBox="0 0 32 32">
                  <rect width="32" height="32" rx="6" fill="#1d1d1d" />
                  <circle cx="9.5" cy="23" r="6" fill="#eee" />
                  <circle cx="22.5" cy="23" r="6" fill="#eee" />
                </svg>
              </ExtensionSlot>
              <ExtensionSlot>
                <svg width="32" height="32" viewBox="0 0 32 32">
                  <path d="M1 1H25L31 7V31H1Z" fill="#f8f8f7" stroke="#ddd" />
                  <rect x="5" y="13" width="5" height="13" fill="#c4c4c2" />
                  <rect x="5" y="7" width="5" height="4" fill="#c4c4c2" />
                  <path d="M13 7H19C31 7 31 26 19 26H13ZM18 12V21C23 21 23 12 18 12Z" fill="#c4c4c2" fillRule="evenodd" />
                </svg>
              </ExtensionSlot>
              <ExtensionSlot>
                <svg width="8" height="32" viewBox="0 0 8 32">
                  <circle cx="4" cy="4" r="3.2" fill="#5f5f5f" />
                  <circle cx="4" cy="16" r="3.2" fill="#5f5f5f" />
                  <circle cx="4" cy="28" r="3.2" fill="#5f5f5f" />
                </svg>
              </ExtensionSlot>
            </Extensions>
          </Toolbar>
          <Viewport>
            <Page>
              <Container>
                <Header>
                  <NavTabs>
                    <NavTab>Mängud</NavTab>
                    <NavTab $active>Mängude sihtkohad</NavTab>
                    <NavTab>Kasutajad</NavTab>
                    <NavTab>Edetabelid</NavTab>
                  </NavTabs>
                  <Logout>Logi välja</Logout>
                </Header>
                <Columns>
                  <ListColumn>
                    <PrimaryButton>Uus punkt</PrimaryButton>
                    {points.map((name, i) => (
                      <PointRow key={name}>
                        <PointButton $selected={i === 0}>{name}</PointButton>
                        <DeleteButton>X</DeleteButton>
                      </PointRow>
                    ))}
                  </ListColumn>
                  <DetailColumn>
                    <Title>mini-Rimi Tartu</Title>
                    <Field>
                      <FieldLabel>Punkti nimi:</FieldLabel>
                      <TextInput readOnly value="mini-Rimi Tartu" />
                    </Field>
                    <Field>
                      <FieldLabel>Punkti kirjeldus:</FieldLabel>
                      <TextArea $height={156} readOnly value="asub kesklinnas" />
                    </Field>
                    <Field>
                      <FieldLabel>Punkti informatsioon (näitamiseks peale punktis jõudmist):</FieldLabel>
                      <TextArea
                        $height={156}
                        readOnly
                        value={"Linnuse Ohvrikivi asub tammederikkas loometsas. Selle\nlähedal kasvab metsõunapuu. Kivi kõrval on kaks väikest\nsama koostisega rahnu."}
                      />
                    </Field>
                    <FieldLabel>Vali koordinaadid:</FieldLabel>
                    <MapFrame>
                      <MapDrawing />
                      <MapTypes>
                        <MapType $active>Map</MapType>
                        <MapType>Satellite</MapType>
                      </MapTypes>
                      <FullscreenButton>
                        <svg width="30" height="30" viewBox="0 0 30 30">
                          <path d="M0 10V0H10V3.5H3.5V10ZM20 0H30V10H26.5V3.5H20ZM0 20H3.5V26.5H10V30H0ZM26.5 20H30V30H20V26.5H26.5Z" fill="#666" />
                        </svg>
                      </FullscreenButton>
                      <ZoomBadge>2</ZoomBadge>
                    </MapFrame>
                  </DetailColumn>
                </Columns>
              </Container>
            </Page>
            <Scrollbar>
              <ScrollArrow>
                <svg width="14" height="8" viewBox="0 0 14 8"><path d="M0 8H14L7 0Z" fill="#505050" /></svg>
              </ScrollArrow>
              <ScrollThumb />
              <ScrollArrow $down>
                <svg width="14" height="8" viewBox="0 0 14 8"><path d="M0 0H14L7 8Z" fill="#505050" /></svg>
              </ScrollArrow>
            </Scrollbar>
          </Viewport>
          <StatusBubble>https://ekmweb.herokuapp.com/#/destinations/59f06ef0ab386100044b9ea4</StatusBubble>
        </Browser>
      </Middle>
    </Screen>
  );
}
